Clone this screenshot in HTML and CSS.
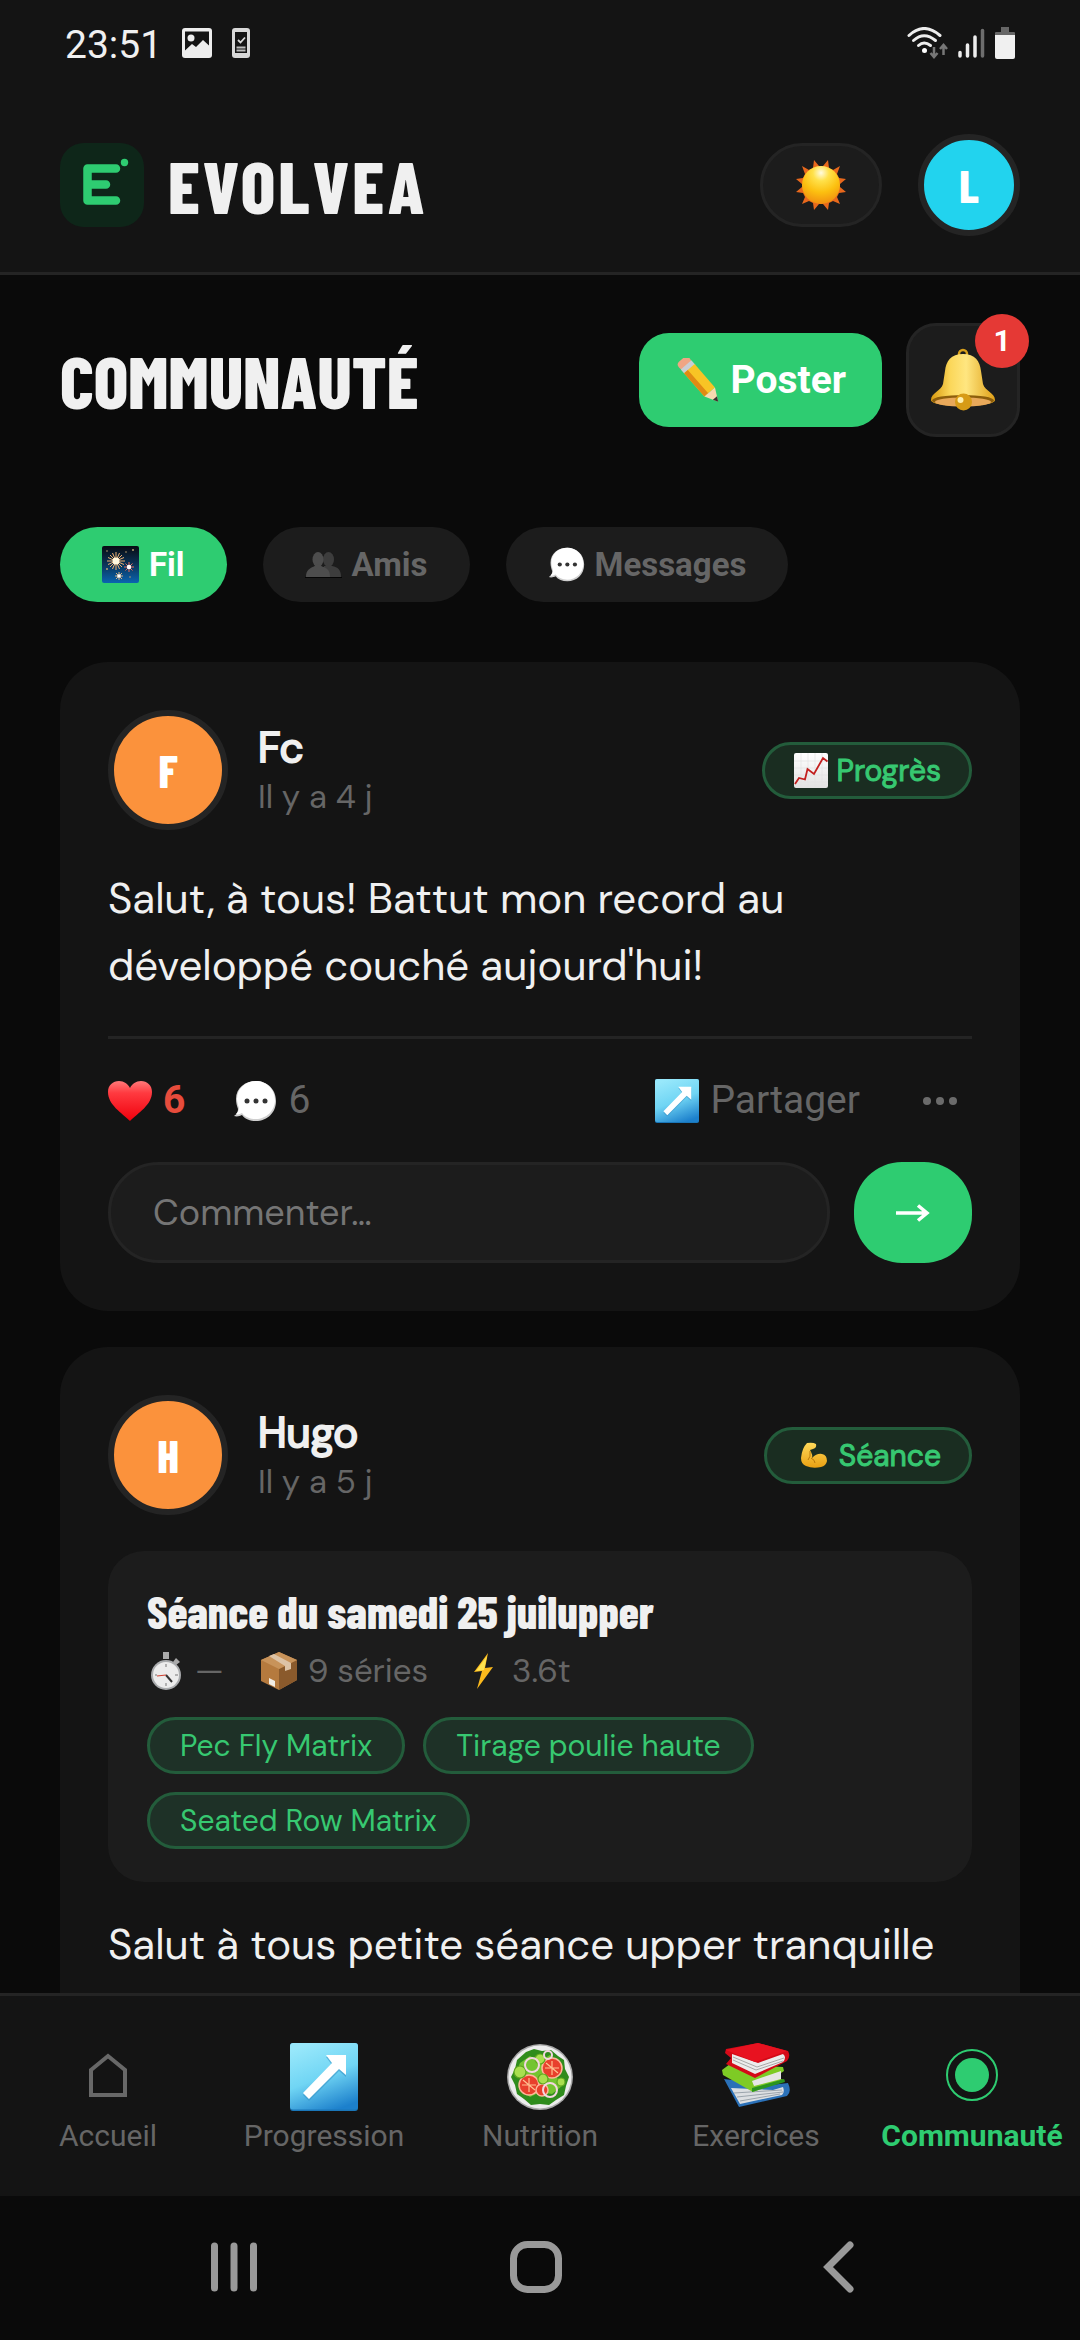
FILE: index.html
```html
<!DOCTYPE html>
<html lang="fr">
<head>
<meta charset="utf-8">
<meta name="viewport" content="width=device-width, initial-scale=1">
<title>Evolvea – Communauté</title>
<link rel="stylesheet" href="styles.css">
</head>
<body>
<svg class="sprite" aria-hidden="true">
  <defs>
    <radialGradient id="g-sun" cx="50%" cy="18%" r="85%"><stop offset="0" stop-color="#fffbe0"/><stop offset=".25" stop-color="#ffe14a"/><stop offset=".6" stop-color="#fcc010"/><stop offset="1" stop-color="#f08a10"/></radialGradient>
    <linearGradient id="g-bell" x1="0" x2="1"><stop offset="0" stop-color="#d99a10"/><stop offset=".3" stop-color="#fbd75a"/><stop offset=".55" stop-color="#ffe680"/><stop offset="1" stop-color="#dfa018"/></linearGradient>
    <linearGradient id="g-night" x1="0" y1="0" x2="0" y2="1"><stop offset="0" stop-color="#070b12"/><stop offset=".5" stop-color="#0b3358"/><stop offset="1" stop-color="#0a64b0"/></linearGradient>
    <linearGradient id="g-sky" x1=".3" y1="0" x2=".7" y2="1"><stop offset="0" stop-color="#98e8fb"/><stop offset=".5" stop-color="#70d5f4"/><stop offset="1" stop-color="#1c80cc"/></linearGradient>
    <linearGradient id="g-heart" x1="0" y1="0" x2="0" y2="1"><stop offset="0" stop-color="#ff7a7a"/><stop offset=".3" stop-color="#ff3a40"/><stop offset="1" stop-color="#f0000c"/></linearGradient>
    <linearGradient id="g-paper" x1="0" y1="0" x2="0" y2="1"><stop offset="0" stop-color="#fff"/><stop offset="1" stop-color="#e2e2e2"/></linearGradient>
    <linearGradient id="g-arm" x1="0" y1="0" x2="0" y2="1"><stop offset="0" stop-color="#ffd95a"/><stop offset="1" stop-color="#e9a012"/></linearGradient>
    <symbol id="i-speech" viewBox="0 0 44 44"><path d="M3 20C3 9 12 2 23 2s20 8 20 20-9 20-20 20c-6 0-11-2-14-6-2 1-5 2-8 1 3-2 4-4 4-7-1-3-2-6-2-10z" fill="#cfcfcf"/><path d="M4 20C4 9 13 2 23 2s19 8 19 19-9 19-19 19c-6 0-11-2-14-6-2 1-4 2-6 1 2-2 3-4 3-6-1-3-2-6-2-9z" fill="#fff"/><circle cx="14" cy="22" r="2.5" fill="#333"/><circle cx="23" cy="22" r="2.5" fill="#333"/><circle cx="32" cy="22" r="2.5" fill="#333"/></symbol>
    <symbol id="i-heart" viewBox="0 0 44 44"><path d="M22 42C14 34 0 26 0 13 0 6 5 2 11 2c5 0 9 3 11 7 2-4 6-7 11-7 6 0 11 4 11 11 0 13-14 21-22 29z" fill="url(#g-heart)"/></symbol>
    <symbol id="i-upright" viewBox="0 0 68 68"><rect width="68" height="68" rx="3" fill="#1a76b8"/><rect width="68" height="66.500" rx="3" fill="url(#g-sky)"/><path d="M36 13h20v20l-7-6-30 30-6-6 29-30z" transform="translate(0 1)" fill="#3b96c8" opacity=".6"/><path d="M36 12h20v20l-7-6-30 30-6-6 29-30z" fill="#fff"/></symbol>
  </defs>
</svg>

<header class="top">
  <div class="status">
    <div class="status-group">
      <span class="clock">23:51</span>
      <svg class="status-picture" viewBox="0 0 30 30"><rect width="30" height="30" rx="3" fill="#ededed"/><path d="M3 3.500h24v14l-6-5.500-7 7-4-3-7 6.500z" fill="#141414"/><circle cx="9" cy="10" r="3.500" fill="#ededed"/></svg>
      <svg class="status-device" viewBox="0 0 18 30"><rect width="18" height="30" rx="3" fill="#d8d8d8"/><rect x="3" y="4" width="12" height="21" fill="#141414"/><path d="M6 12l2.500 2.500L13 9.500" stroke="#d8d8d8" stroke-width="1.800" fill="none"/><path d="M4.500 19.500h9M4.500 22.500h9" stroke="#bbb" stroke-width="2"/></svg>
    </div>
    <div class="status-group status-right">
      <svg class="status-wifi" viewBox="0 0 42 32"><g fill="none" stroke="#ededed" stroke-width="3" stroke-linecap="round"><path d="M2 8.500Q17-5.500 33 8.500"/><path d="M6.500 13.500Q17 4 28.500 13.500"/><path d="M11.500 18.500Q17 13.500 23.500 18.500"/></g><circle cx="17.500" cy="23.500" r="2.500" fill="#fff"/><path d="M27 20v9M23.500 26l3.500 4 3.500-4M36.500 28v-9M33 22l3.500-4 3.500 4" fill="none" stroke="#777" stroke-width="2.500"/></svg>
      <svg class="status-signal" viewBox="0 0 28 30"><g stroke-width="3.500" stroke-linecap="round" stroke="#ededed"><path d="M2 24.500V28M9.500 17V28M17 9V28"/><path d="M24.500 2.500V28" stroke="#6e6e6e"/></g></svg>
      <svg class="status-battery" viewBox="0 0 20 32"><path d="M6 0h8v5h5q1 0 1 1v3H0V6q0-1 1-1h5z" fill="#666"/><path d="M0 8h20v22q0 2-2 2H2q-2 0-2-2z" fill="#f0f0f0"/></svg>
    </div>
  </div>
  <div class="brand-bar">
    <a class="brand" href="#">
      <svg class="logo" viewBox="0 0 84 84"><rect width="84" height="84" rx="24" fill="#0e2619"/><path d="M56 25.500H27.500v32H56M27.500 41.500H46" fill="none" stroke="#2ecc71" stroke-width="8.500" stroke-linecap="round" stroke-linejoin="round"/><circle cx="64.500" cy="19.500" r="3.700" fill="#2ecc71"/></svg>
      <span class="brand-name">EVOLVEA</span>
    </a>
    <button class="theme" type="button" aria-label="Thème clair">
      <svg class="i50" viewBox="0 0 50 50"><path fill="#e8681c" d="M18 0l5 6h4l5-6 1 8 4 2 7-4-3 8 2 4 7 1-6 5v3l6 5-7 1-2 4 3 7-7-3-4 2-1 7-5-6h-4l-5 6-1-7-4-2-7 3 3-7-2-4-7-1 6-5v-3l-6-5 7-1 2-4-3-8 7 4 4-2z"/><circle cx="25" cy="25" r="19" fill="url(#g-sun)"/></svg>
    </button>
    <a class="avatar avatar-me" href="#">L</a>
  </div>
</header>

<main class="content">
  <div class="page-head">
    <h1>COMMUNAUTÉ</h1>
    <button class="post-button" type="button">
      <svg class="i44" viewBox="0 0 44 44"><g transform="translate(5 0) rotate(49 4 6)"><rect x="-1" y="-2" width="9" height="14" rx="4" fill="#f0a583"/><rect x="6" y="-2" width="6" height="14" fill="#c9ced4"/><rect x="11" y="-2" width="31" height="14" fill="#f8c425"/><rect x="11" y="7" width="31" height="5" fill="#e08a14"/><path d="M42-2l13 7L42 12z" fill="#f7d9b0"/><path d="M50 2.300l5 2.700-5 2.700z" fill="#3a3430"/></g></svg>
      Poster
    </button>
    <button class="bell" type="button" aria-label="Notifications">
      <svg class="i64" viewBox="0 0 64 64"><circle cx="32" cy="6" r="4" fill="none" stroke="#d9a11c" stroke-width="2.500"/><path d="M32 6c12 0 17 7 18 17l2 13c2 7 12 9 12 16 0 8-64 8-64 0 0-7 10-9 12-16l2-13C15 13 20 6 32 6z" fill="url(#g-bell)"/><ellipse cx="32" cy="52.500" rx="31" ry="5.500" fill="#8d5e0c"/><ellipse cx="32" cy="54" rx="28" ry="4.500" fill="#e8a85a"/><circle cx="32.500" cy="54" r="8.500" fill="#d79b16"/><circle cx="29.500" cy="52" r="3" fill="#fff0b0"/></svg>
      <span class="bell-count">1</span>
    </button>
  </div>

  <nav class="tabs" aria-label="Sections">
    <button class="tab tab-active" type="button">
      <svg class="i37" viewBox="0 0 37 37"><rect width="37" height="37" rx="2" fill="url(#g-night)"/><g stroke="#f0b070" stroke-width="1"><path d="M14 6v18M5 15h18M8 9l12 12M20 9L8 21M10.500 7l7 16M17.500 7l-7 16M6 11.500l16 7M22 11.500l-16 7"/><path d="M27 16v10M22 21h10M23.500 17.500l7 7M30.500 17.500l-7 7" stroke="#e86a5a"/><path d="M17 26v8M13 30h8M14 27l6 6M20 27l-6 6" stroke="#d8b080"/></g><circle cx="14" cy="15" r="3.500" fill="#fff8e0"/><circle cx="27" cy="21" r="2.200" fill="#fff"/><circle cx="17" cy="30" r="1.800" fill="#fff"/><g fill="#b9a070"><circle cx="5" cy="5" r=".8"/><circle cx="31" cy="4" r="1"/><circle cx="5" cy="23" r="1"/><circle cx="24" cy="6" r=".8"/><circle cx="28" cy="31" r=".8"/></g></svg>
      Fil
    </button>
    <button class="tab" type="button">
      <svg class="i37" viewBox="0 0 37 37"><g fill="#3d3d3d"><ellipse cx="23.500" cy="13.500" rx="5.500" ry="7.500"/><path d="M19 31V20h8c6 1 9 4 9 11z"/></g><path d="M0 31.500h37" stroke="#050505"/><g fill="#4d4d4d"><ellipse cx="13" cy="13.500" rx="5.500" ry="7.500"/><path d="M1 31c0-7 4-9 8-10.500l2-2h4l2 2c5 1.500 8 3.500 8 10.500z"/></g></svg>
      Amis
    </button>
    <button class="tab" type="button">
      <svg class="i37"><use href="#i-speech"/></svg>
      Messages
    </button>
  </nav>

  <article class="card">
    <div class="card-head">
      <span class="avatar avatar-user">F</span>
      <div class="who"><strong class="name">Fc</strong><span class="when">Il y a 4 j</span></div>
      <span class="tag">
        <svg class="i36" viewBox="0 0 36 36"><rect x="1" y="1" width="34" height="35" rx="2" fill="url(#g-paper)"/><path d="M8 1v34M15 1v34M22 1v34M29 1v34M1 9h34M1 16h34M1 23h34M1 30h34" stroke="#e3e3e3" stroke-width=".7"/><path d="M2 32l4-6 6 1.500L14.500 17l6.500 5L30 6l4.500 3.500" fill="none" stroke="#c3201f" stroke-width="1.800"/></svg>
        Progrès
      </span>
    </div>
    <p class="post-text">Salut, à tous! Battut mon record au développé couché aujourd'hui!</p>
    <div class="actions">
      <button class="action action-liked" type="button"><svg class="i44"><use href="#i-heart"/></svg>6</button>
      <button class="action" type="button"><svg class="i44"><use href="#i-speech"/></svg>6</button>
      <button class="action action-share" type="button"><svg class="i44"><use href="#i-upright"/></svg>Partager</button>
      <button class="more" type="button" aria-label="Plus d'options"><svg class="dots" viewBox="0 0 34 10"><g fill="#6b6b6b"><circle cx="4" cy="5" r="4"/><circle cx="17" cy="5" r="4"/><circle cx="30" cy="5" r="4"/></g></svg></button>
    </div>
    <form class="comment">
      <input class="comment-input" type="text" placeholder="Commenter…" aria-label="Commenter">
      <button class="send" type="button" aria-label="Envoyer"><svg class="arrow" viewBox="0 0 34 18"><path d="M0 9h31M22 1.500L31 9l-9 7.500" fill="none" stroke="#fff" stroke-width="3.500"/></svg></button>
    </form>
  </article>

  <article class="card">
    <div class="card-head">
      <span class="avatar avatar-user">H</span>
      <div class="who"><strong class="name">Hugo</strong><span class="when">Il y a 5 j</span></div>
      <span class="tag">
        <svg class="i36" viewBox="0 0 36 36"><path d="M12 6q6-1 9 1 1 4-3 5l-3 1q3 5 2 8 5-5 10-4 5 1 5 7-1 5-6 6-8 2-15-1-5-2-5-8Q7 11 12 6z" fill="url(#g-arm)"/><path d="M15 14q1 6-2 9M16 21q4 2 4 5" fill="none" stroke="#b8780a" stroke-width="1"/></svg>
        Séance
      </span>
    </div>
    <section class="session">
      <h2>Séance du samedi 25 juilupper</h2>
      <ul class="stats">
        <li><svg class="i38" viewBox="0 0 38 38"><path d="M16 0h6v7h-6zM29 6l4 4-4 3-3-3z" fill="#aaa"/><circle cx="19" cy="23" r="15" fill="#a9abad"/><circle cx="19" cy="23" r="13" fill="#ececec"/><path d="M19 23l6 7" stroke="#333" stroke-width="2"/><path d="M19 23l-9 1" stroke="#d04030" stroke-width="1.200"/><path d="M19 12v3M19 31v3M8 23h2M28 23h3" stroke="#777"/></svg>—</li>
        <li><svg class="i38" viewBox="0 0 38 38"><path d="M19 0l18 8v20L19 38 1 29V8z" fill="#b57a3e"/><path d="M19 17l18-9v20L19 38z" fill="#8a5a2c"/><path d="M1 8l18-8 18 8-18 9z" fill="#c8935a"/><path d="M9 4l5-2 17 9v6l-6 2v-5z" fill="#ddc3a6"/><path d="M9 26l6 3v6l-6-3z" fill="#f2ede4"/></svg>9 séries</li>
        <li><svg class="i38" viewBox="0 0 38 38"><path d="M24 1L10 20l8-1-5 18 16-22-8 1z" fill="#fbb91c"/><path d="M23 4L12 19l8-1z" fill="#ffe34f"/></svg>3.6t</li>
      </ul>
      <ul class="chips">
        <li>Pec Fly Matrix</li>
        <li>Tirage poulie haute</li>
        <li>Seated Row Matrix</li>
      </ul>
    </section>
    <p class="post-text">Salut à tous petite séance upper tranquille</p>
    <div class="actions">
      <button class="action" type="button" aria-label="J'aime"><svg class="i44"><use href="#i-heart"/></svg></button>
      <button class="action" type="button" aria-label="Commentaires"><svg class="i44"><use href="#i-speech"/></svg></button>
    </div>
  </article>
</main>

<nav class="bottom-nav" aria-label="Navigation principale">
  <a class="nav-item" href="#"><svg class="i68" viewBox="0 0 68 68"><path d="M17 27L34 13l17 14v25H17z" fill="none" stroke="#686868" stroke-width="4"/></svg>Accueil</a>
  <a class="nav-item" href="#"><svg class="i68"><use href="#i-upright"/></svg>Progression</a>
  <a class="nav-item" href="#"><svg class="i68" viewBox="0 0 68 68"><circle cx="34" cy="34" r="33" fill="#a8a8a8"/><circle cx="34" cy="34" r="31.500" fill="#ededed"/><path d="M20 9l8-3 8 2 9-1 7 6 6 4 1 9 4 8-3 9-2 9-8 5-7 5-9-1-9 1-7-6-7-5-2-9-4-8 4-8 2-9z" fill="#2f8c1c"/><path d="M14 20l10-7 10 5 10-6 10 9-4 12 6 10-10 8-12-2-10 5-10-9 3-10-6-8z" fill="#74c431"/><g fill="#e8402c" stroke="#ffb59a" stroke-width="1.500"><circle cx="23" cy="42" r="10"/><circle cx="46" cy="25" r="10"/><circle cx="36" cy="47" r="6"/></g><g fill="none" stroke="#ffc090" stroke-width="1.200"><path d="M23 35v14M16 42h14M46 18v14M39 25h14M17 37l12 10M40 20l12 10"/></g><g fill="#a9df4f" stroke="#5da51e" stroke-width="1.200"><circle cx="14" cy="29" r="6"/><circle cx="34" cy="16" r="5"/><circle cx="37" cy="36" r="5"/><circle cx="55" cy="39" r="4"/></g><g fill="none" stroke="#f4d6e0" stroke-width="2"><circle cx="26" cy="22" r="7"/><circle cx="44" cy="47" r="7"/><circle cx="42" cy="12" r="4"/></g></svg>Nutrition</a>
  <a class="nav-item" href="#"><svg class="i68" viewBox="0 0 68 68"><path d="M2 36l47 6 17-2q4 9-1 13L17 64z" fill="#2b71b8"/><path d="M9 45l42 2 10-3q2 5-1 8L18 61z" fill="#dcdfe2"/><path d="M12 50l48-3M15 54l46-5M18 58l40-7" stroke="#9ba4ac"/><path d="M1 32l-1-5 8-6 53 3 1 4-3 2-1 6 5 1-32 12z" fill="#7ecb25"/><path d="M30 38l29-10 0 8-27 7z" fill="#e6e6e6"/><path d="M30 49l33-10-1-3-32 9z" fill="#2a9420"/><path d="M4 21l5-6-6-5 1-4 32-6 30 8q3 5-1 10L33 35z" fill="#d40a18"/><path d="M10 11l26 9 25-9q4 3 0 8L33 31 10 20z" fill="#ececec"/><path d="M11 14l24 10 27-9M11 17l23 10 27-9" fill="none" stroke="#a9a9a9"/><path d="M4 7l32-7 29 8-32 11z" fill="#e81220"/></svg>Exercices</a>
  <a class="nav-item nav-active" href="#"><svg class="i68" viewBox="0 0 68 68"><circle cx="34" cy="32" r="25" fill="none" stroke="#2ecc71" stroke-width="2"/><circle cx="34" cy="32" r="17" fill="#2ecc71"/></svg>Communauté</a>
</nav>

<div class="system-nav">
  <button type="button" aria-label="Applications récentes"><svg class="i54" viewBox="0 0 54 54"><path d="M7.500 6v42M27 6v42M46.500 6v42" stroke="#999" stroke-width="7" stroke-linecap="round"/></svg></button>
  <button type="button" aria-label="Accueil du téléphone"><svg class="i54" viewBox="0 0 54 54"><rect x="4.500" y="4.500" width="45" height="45" rx="14" fill="none" stroke="#999" stroke-width="7"/></svg></button>
  <button type="button" aria-label="Retour"><svg class="i54" viewBox="0 0 54 54"><path d="M39 5L17 27l22 22" fill="none" stroke="#999" stroke-width="7" stroke-linecap="round" stroke-linejoin="miter"/></svg></button>
</div>
</body>
</html>
```
FILE: styles.css
```css
:root {
  --bg: #0a0a0a;
  --surface: #141414;
  --raised: #1c1c1c;
  --line: #242424;
  --text: #f0f0f0;
  --muted: #666;
  --green: #2ecc71;
  --ui: Roboto, "Noto Sans", sans-serif;
  --body: "DM Sans", Inter, "Noto Sans", sans-serif;
  --display: "Barlow Condensed", "Roboto Condensed", "Liberation Sans Narrow", sans-serif;
}

* { box-sizing: border-box; }

body {
  margin: 0;
  height: 100vh;
  display: flex;
  flex-direction: column;
  background: var(--bg);
  color: var(--text);
  font-family: var(--body);
}

button {
  margin: 0;
  padding: 0;
  border: 0;
  background: none;
  color: inherit;
  font-family: var(--ui);
}

a { color: inherit; text-decoration: none; }
h1, h2, p, ul { margin: 0; padding: 0; }
ul { list-style: none; }
svg { display: block; flex: none; }
.sprite { position: absolute; width: 0; height: 0; }

.i36 { width: 36px; height: 36px; }
.i37 { width: 37px; height: 37px; }
.i38 { width: 38px; height: 38px; }
.i44 { width: 44px; height: 44px; }
.i50 { width: 50px; height: 50px; }
.i54 { width: 54px; height: 54px; }
.i64 { width: 64px; height: 64px; }
.i68 { width: 68px; height: 68px; }

/* Status bar and brand header */
.top {
  flex: none;
  background: var(--surface);
  border-bottom: 3px solid var(--line);
}

.status {
  height: 86px;
  padding: 0 65px;
  display: flex;
  align-items: center;
  justify-content: space-between;
}

.status-group { display: flex; align-items: center; gap: 20px; }
.status-right { gap: 9px; }
.clock { padding-top: 4px; font: 400 39px/48px var(--ui); }
.status-picture { width: 30px; height: 30px; }
.status-device { width: 18px; height: 30px; }
.status-wifi { width: 42px; height: 32px; }
.status-signal { width: 28px; height: 30px; }
.status-battery { width: 20px; height: 32px; }

.brand-bar {
  padding: 48px 60px 36px;
  display: flex;
  align-items: center;
  gap: 36px;
}

.brand {
  margin-right: auto;
  display: flex;
  align-items: center;
  gap: 24px;
}

.logo { width: 84px; height: 84px; }
.brand-name { font: 800 72px/84px var(--display); letter-spacing: 3px; }

.theme {
  padding: 14px 33px;
  border: 3px solid var(--line);
  border-radius: 42px;
  background: var(--raised);
}

.avatar {
  flex: none;
  display: grid;
  place-items: center;
  border: 6px solid var(--line);
  border-radius: 50%;
  color: #fff;
  font: 800 45px/54px var(--display);
}

.avatar-me { width: 102px; height: 102px; background: #22d3ee; }
.avatar-user { width: 120px; height: 120px; background: #fb923c; }

/* Page content */
.content {
  flex: 1;
  min-height: 0;
  overflow-y: auto;
  scrollbar-width: none;
  padding: 48px 60px;
}

.page-head {
  display: flex;
  align-items: center;
  gap: 24px;
  margin-bottom: 90px;
}

h1 { margin-right: auto; font: 800 72px/84px var(--display); }

.post-button {
  display: flex;
  align-items: center;
  gap: 12px;
  padding: 24px 36px;
  border-radius: 30px;
  background: var(--green);
  color: #fff;
  font-size: 39px;
  font-weight: 700;
  line-height: 46px;
}

.bell {
  position: relative;
  padding: 22px;
  border: 3px solid var(--line);
  border-radius: 30px;
  background: var(--raised);
}

.bell-count {
  position: absolute;
  top: -12px;
  right: -12px;
  width: 54px;
  height: 54px;
  border-radius: 50%;
  background: #e53935;
  color: #fff;
  font-size: 30px;
  font-weight: 700;
  line-height: 54px;
  text-align: center;
}

.tabs { display: flex; gap: 36px; margin-bottom: 60px; }

.tab {
  display: flex;
  align-items: center;
  gap: 10px;
  padding: 18px 42px;
  border-radius: 38px;
  background: var(--raised);
  color: var(--muted);
  font-size: 33px;
  font-weight: 700;
  line-height: 39px;
}

.tab-active { background: var(--green); color: #fff; }

/* Post cards */
.card {
  margin-bottom: 36px;
  padding: 48px;
  border-radius: 48px;
  background: var(--surface);
}

.card-head { display: flex; align-items: center; gap: 30px; }
.who { flex: 1; min-width: 0; padding-top: 2px; display: flex; flex-direction: column; }
.name {
  font-size: 42px;
  font-weight: 400;
  line-height: 51px;
  -webkit-text-stroke: 2px currentColor;
}
.when { color: var(--muted); font-size: 33px; line-height: 47px; }

.tag,
.chips li {
  border: 3px solid #235c3b;
  border-radius: 30px;
  background: #1a2d21;
  color: #37c871;
  font-size: 30px;
  line-height: 39px;
}

.tag {
  display: flex;
  align-items: center;
  gap: 8px;
  padding: 6px 28px;
  -webkit-text-stroke: 1px currentColor;
}

.post-text {
  margin-top: 35px;
  font-size: 42px;
  line-height: 67px;
}

.actions {
  display: flex;
  align-items: center;
  gap: 48px;
  margin-top: 37px;
  padding: 36px 0;
  border-top: 3px solid var(--line);
}

.action {
  display: flex;
  align-items: center;
  gap: 11px;
  color: var(--muted);
  font-size: 39px;
  line-height: 51px;
}

.action-liked { color: #e74c3c; font-weight: 700; }
.action-share { margin-left: auto; }
.more { padding: 0 15px; }
.dots { width: 34px; height: 10px; }

.comment { display: flex; gap: 24px; }

.comment-input {
  flex: 1;
  min-width: 0;
  margin: 0;
  padding: 26px 42px;
  border: 3px solid var(--line);
  border-radius: 51px;
  outline: 0;
  background: var(--raised);
  color: var(--text);
  font: 400 36px/43px var(--body);
}

.comment-input::placeholder { color: #757575; opacity: 1; }
.send { padding: 0 42px; border-radius: 48px; background: var(--green); }
.arrow { width: 34px; height: 18px; }

.session {
  margin-top: 36px;
  padding: 33px 39px;
  border-radius: 36px;
  background: var(--raised);
}

h2 { font: 800 45px/54px var(--display); }

.stats {
  display: flex;
  gap: 36px;
  margin: 10px 0 23px;
  color: var(--muted);
  font-size: 33px;
  line-height: 46px;
}

.stats li { display: flex; align-items: center; gap: 10px; }
.chips { display: flex; flex-wrap: wrap; gap: 18px; }
.chips li { padding: 6px 30px; background: #1e3127; }
.session + .post-text { margin-top: 29px; }

/* Bottom navigation */
.bottom-nav {
  flex: none;
  display: grid;
  grid-template-columns: repeat(5, minmax(0, 1fr));
  padding: 47px 0 42px;
  border-top: 3px solid var(--line);
  background: var(--surface);
}

.nav-item {
  display: flex;
  flex-direction: column;
  align-items: center;
  gap: 7px;
  color: var(--muted);
  font: 400 30px/36px var(--ui);
}

.nav-active { color: var(--green); font-weight: 700; }

.system-nav {
  flex: none;
  display: flex;
  justify-content: center;
  gap: 248px;
  padding: 44px 8px 46px 0;
}
```
